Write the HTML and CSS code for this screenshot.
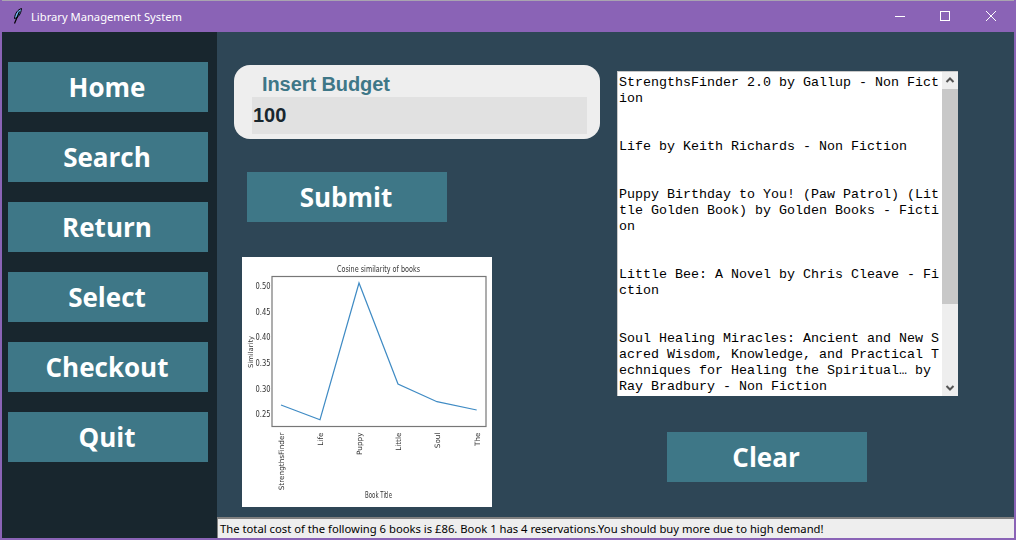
FILE: index.html
```html
<!DOCTYPE html>
<html lang="en">
<head>
    <meta charset="UTF-8">
    <meta name="viewport" content="width=device-width, initial-scale=1.0">
    <title>Library Management System</title>
    <link rel="stylesheet" href="styles.css">
</head>
<body>
    <div class="window">
        <div class="titlebar">
            <svg class="app-icon" width="16" height="16" viewBox="0 0 16 16">
                <path d="M11.500 .5 C8 1.500 5 5 4.500 10.500 C8 10 11 6 11.500 .5 Z" fill="#6fb2ee" stroke="#000" stroke-width="1"/>
                <path d="M9.500 3.500 L4.500 15.500" stroke="#000" stroke-width="1.200" fill="none"/>
            </svg>
            <span class="title-text">Library Management System</span>
            <div class="win-controls">
                <svg width="46" height="32" viewBox="0 0 46 32"><path d="M19 16.500 H29" stroke="#fff" fill="none"/></svg>
                <svg width="46" height="32" viewBox="0 0 46 32"><rect x="18.500" y="11.500" width="9" height="9" stroke="#fff" fill="none"/></svg>
                <svg width="46" height="32" viewBox="0 0 46 32"><path d="M18 11 L28 21 M28 11 L18 21" stroke="#fff" fill="none"/></svg>
            </div>
        </div>
        <div class="app">
            <div class="sidebar">
                <button class="btn">Home</button>
                <button class="btn">Search</button>
                <button class="btn">Return</button>
                <button class="btn">Select</button>
                <button class="btn">Checkout</button>
                <button class="btn">Quit</button>
            </div>
            <div class="main">
                <div class="content">
                    <div class="left-col">
                        <div class="budget-card">
                            <div class="budget-label">Insert Budget</div>
                            <div class="budget-input">100</div>
                        </div>
                        <button class="btn submit-btn">Submit</button>
                        <svg class="chart" width="250" height="250" viewBox="0 0 250 250">
                            <rect width="250" height="250" fill="#fff"/>
                            <text class="chart-text" x="136.500" y="15" font-size="9.500" text-anchor="middle" textLength="83" lengthAdjust="spacingAndGlyphs">Cosine similarity of books</text>
                            <rect x="30" y="19.500" width="214" height="150" fill="none" stroke="#777" stroke-width="1.200"/>
                            <polyline points="39,148 78,162.700 117,26 156,127 195,144.700 234.700,153" fill="none" stroke="#3f8bc4" stroke-width="1.200"/>
                            <g class="chart-text" font-size="8">
                                <text x="13.500" y="32" textLength="15" lengthAdjust="spacingAndGlyphs">0.50</text>
                                <text x="13.500" y="58" textLength="15" lengthAdjust="spacingAndGlyphs">0.45</text>
                                <text x="13.500" y="83" textLength="15" lengthAdjust="spacingAndGlyphs">0.40</text>
                                <text x="13.500" y="109" textLength="15" lengthAdjust="spacingAndGlyphs">0.35</text>
                                <text x="13.500" y="135" textLength="15" lengthAdjust="spacingAndGlyphs">0.30</text>
                                <text x="13.500" y="160" textLength="15" lengthAdjust="spacingAndGlyphs">0.25</text>
                            </g>
                            <text class="chart-text" font-size="6.800" text-anchor="middle" transform="translate(10.500 95) rotate(-90)">Similarity</text>
                            <g class="chart-text" font-size="7.300" text-anchor="end">
                                <text transform="translate(42 175.500) rotate(-90)">StrengthsFinder</text>
                                <text transform="translate(81 175.500) rotate(-90)">Life</text>
                                <text transform="translate(120 175.500) rotate(-90)">Puppy</text>
                                <text transform="translate(159 175.500) rotate(-90)">Little</text>
                                <text transform="translate(198 175.500) rotate(-90)">Soul</text>
                                <text transform="translate(237.500 175.500) rotate(-90)">The</text>
                            </g>
                            <text class="chart-text" x="136.500" y="241" font-size="8" text-anchor="middle" textLength="27" lengthAdjust="spacingAndGlyphs">Book Title</text>
                        </svg>
                    </div>
                    <div class="right-col">
                        <div class="book-box">
<div class="book-text">StrengthsFinder 2.0 by Gallup - Non Fiction


Life by Keith Richards - Non Fiction


Puppy Birthday to You! (Paw Patrol) (Little Golden Book) by Golden Books - Fiction


Little Bee: A Novel by Chris Cleave - Fiction


Soul Healing Miracles: Ancient and New Sacred Wisdom, Knowledge, and Practical Techniques for Healing the Spiritual… by Ray Bradbury - Non Fiction</div>
                            <div class="scrollbar">
                                <svg class="arrow" width="16" height="17" viewBox="0 0 16 17"><path d="M4.500 10 L8 6.500 L11.500 10" fill="none" stroke="#555" stroke-width="2"/></svg>
                                <div class="track"><div class="thumb"></div></div>
                                <svg class="arrow" width="16" height="17" viewBox="0 0 16 17"><path d="M4.500 7 L8 10.500 L11.500 7" fill="none" stroke="#555" stroke-width="2"/></svg>
                            </div>
                        </div>
                        <button class="btn clear-btn">Clear</button>
                    </div>
                </div>
                <div class="status">The total cost of the following 6 books is £86. Book 1 has 4 reservations.You should buy more due to high demand!</div>
            </div>
        </div>
    </div>
</body>
</html>
```
FILE: styles.css
```css
html, body {
    margin: 0;
    padding: 0;
    height: 100%;
    overflow: hidden;
}
.window {
    width: 1016px;
    height: 540px;
    box-sizing: border-box;
    display: flex;
    flex-direction: column;
    background-color: #8a63b6;
    padding: 0 2px 2px;
}
.titlebar {
    height: 32px;
    flex: none;
    display: flex;
    align-items: center;
    color: #fff;
    font-family: "Noto Sans", sans-serif;
    font-size: 11.200px;
    box-shadow: inset 0 1px 0 #a9a4b0;
}
.app-icon {
    margin-left: 8px;
    margin-right: 5px;
}
.win-controls {
    margin-left: auto;
    display: flex;
}
.win-controls svg {
    display: block;
}
.app {
    flex: 1;
    display: flex;
    min-height: 0;
}
.sidebar {
    width: 215px;
    flex: none;
    box-sizing: border-box;
    background-color: #18262e;
    padding: 30px 0 0 6px;
    display: flex;
    flex-direction: column;
    gap: 20px;
}
.btn {
    display: block;
    width: 200px;
    height: 50px;
    padding: 0 2px 0 0;
    border: none;
    background-color: #3e7787;
    color: #fff;
    font-family: "Open Sans", sans-serif;
    font-weight: bold;
    font-size: 26px;
    cursor: pointer;
}
.main {
    flex: 1;
    display: flex;
    flex-direction: column;
    min-width: 0;
    background-color: #2e4656;
}
.content {
    flex: 1;
    display: flex;
    padding: 33px 0 0 17px;
    min-height: 0;
}
.left-col {
    width: 366px;
    flex: none;
}
.budget-card {
    height: 74px;
    box-sizing: border-box;
    background-color: #eeeeee;
    border-radius: 16px;
    padding: 7px 13px 0 18px;
}
.budget-label {
    font-family: "Liberation Sans", Arial, sans-serif;
    font-weight: bold;
    font-size: 20px;
    letter-spacing: -0.08px;
    line-height: 25px;
    color: #3e7787;
    padding-left: 10px;
}
.budget-input {
    height: 37px;
    background-color: #e1e1e1;
    font-family: "Liberation Sans", Arial, sans-serif;
    font-weight: bold;
    font-size: 20px;
    line-height: 36px;
    color: #18262e;
    padding-left: 1px;
}
.submit-btn {
    margin: 33px 0 0 13px;
}
.chart {
    display: block;
    margin: 35px 0 0 8px;
    filter: blur(0.4px);
}
.chart-text {
    font-family: "DejaVu Sans", sans-serif;
    fill: #333;
}
.right-col {
    margin-left: 17px;
    margin-top: 6px;
}
.book-box {
    width: 341px;
    height: 325px;
    box-sizing: border-box;
    background-color: #fff;
    border-top: 1px solid #c8c8c8;
    border-left: 1px solid #c8c8c8;
    display: flex;
    overflow: hidden;
}
.book-text {
    width: 323px;
    flex: none;
    box-sizing: border-box;
    padding: 3px 0 0 1px;
    font-family: "Liberation Mono", "Courier New", monospace;
    font-size: 13.33px;
    line-height: 16px;
    color: #000;
    white-space: pre-wrap;
    word-break: break-all;
}
.scrollbar {
    width: 16px;
    margin-left: 1px;
    flex: none;
    display: flex;
    flex-direction: column;
    background-color: #eeeeee;
}
.arrow {
    display: block;
    flex: none;
}
.track {
    flex: 1;
}
.thumb {
    height: 215px;
    background-color: #c8c8c8;
}
.clear-btn {
    margin: 36px 0 0 50px;
}
.status {
    height: 21px;
    flex: none;
    box-sizing: border-box;
    border-top: 2px solid #808080;
    border-left: 1px solid #808080;
    background-color: #eeeeee;
    font-family: "Noto Sans", sans-serif;
    font-size: 11.260px;
    line-height: 19px;
    padding-left: 2px;
    color: #000;
    white-space: nowrap;
}
```
